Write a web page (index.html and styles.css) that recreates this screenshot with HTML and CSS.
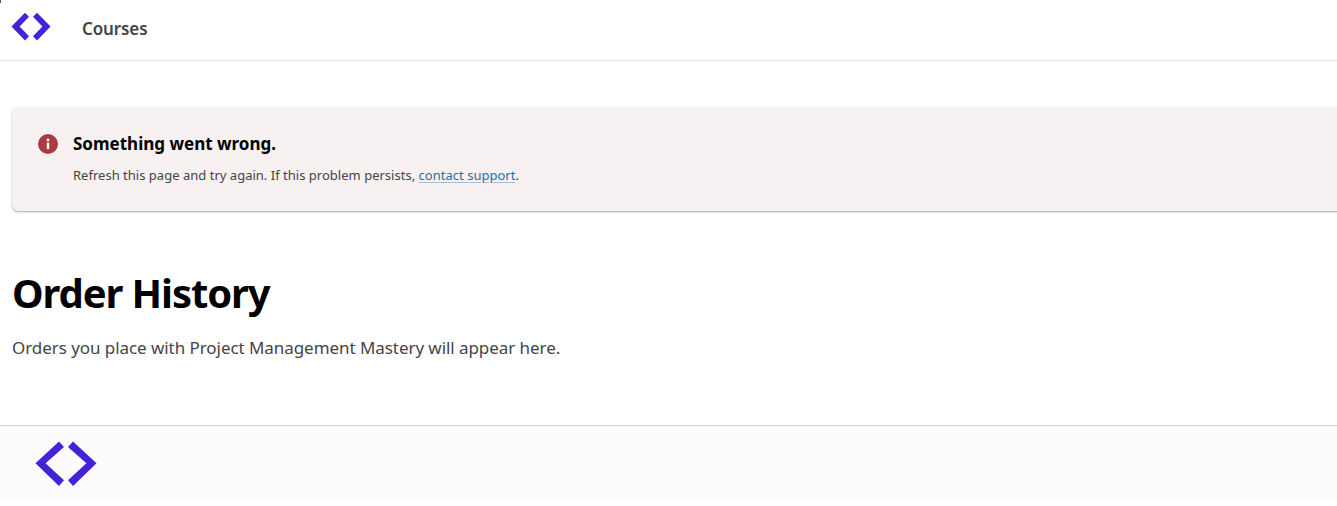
FILE: index.html
```html
<!DOCTYPE html>
<html lang="en">
<head>
<meta charset="utf-8">
<title>Order History</title>
<link rel="stylesheet" href="styles.css">
</head>
<body>
<span class="corner-tick"></span>
<header class="site-header">
  <svg class="logo logo-small" viewBox="0 0 42 31" aria-hidden="true"><path d="M1.5 15.5 15 1.7 19 5.8 9.6 15.5 19 25.2 15 29.5ZM40.5 15.5 27 1.7 23 5.8 32.4 15.5 23 25.2 27 29.5Z"/></svg>
  <a class="nav-link" href="#">Courses</a>
</header>
<main class="content">
  <section class="alert">
    <svg class="alert-icon" viewBox="0 0 20 20" aria-hidden="true"><circle cx="10" cy="10" r="10" class="alert-disc"/><rect x="8.8" y="8.6" width="2.4" height="6.4" class="alert-mark"/><circle cx="10" cy="6" r="1.4" class="alert-mark"/></svg>
    <div class="alert-body">
      <h2 class="alert-title">Something went wrong.</h2>
      <p class="alert-text">Refresh this page and try again. If this problem persists, <a class="alert-link" href="#">contact support</a>.</p>
    </div>
  </section>
  <h1 class="page-title">Order History</h1>
  <p class="page-text">Orders you place with Project Management Mastery will appear here.</p>
</main>
<footer class="site-footer">
  <svg class="logo logo-large" viewBox="0 0 64 48" aria-hidden="true"><path d="M1.5 23.3 25 1.5 30 7 11.6 23.3 30 40.2 25 46ZM62.5 23.3 39 1.5 34 7 52.4 23.3 34 40.2 39 46Z"/></svg>
</footer>
</body>
</html>
```
FILE: styles.css
```css
html, body { margin: 0; padding: 0; background: #fff; overflow: hidden; }
body { font-family: "Noto Sans", "Open Sans", sans-serif; height: 506px; color: #454545; }
.corner-tick { position: absolute; left: 0; top: 0; width: 1px; height: 3px; background: #555; }
.site-header { height: 60px; border-bottom: 1px solid #e2e2e2; display: flex; align-items: center; padding-left: 10px; }
.logo { fill: #4422d8; stroke: none; display: block; }
.logo-small { width: 42px; height: 31px; margin-top: -7px; }
.logo-large { width: 64px; height: 48px; }
.nav-link { margin-left: 30px; font-size: 17px; font-weight: 600; letter-spacing: -0.12px; color: #454545; text-decoration: none; margin-top: -4px; }
.content { padding: 46px 0 0 12px; height: 364px; box-sizing: border-box; }
.alert { width: 1400px; height: 104px; box-sizing: border-box; background: #f7f1f1; border-radius: 6px; box-shadow: 0 1px 2px rgba(0,0,0,.35); display: flex; padding: 26px 0 0 26px; }
.alert-icon { width: 20px; height: 20px; flex: none; margin: 1px 15px 0 0; }
.alert-disc { fill: #ab3b3f; }
.alert-mark { fill: #fff; }
.alert-title { margin: 0; font-size: 17px; line-height: 22px; font-weight: 700; color: #000; }
.alert-text { margin: 10px 0 0; font-size: 13px; line-height: 20px; letter-spacing: 0.015px; color: #454545; }
.alert-link { color: #2a6ea8; text-decoration: underline; text-decoration-color: #a9bfd6; text-underline-offset: 2px; }
.page-title { margin: 58px 0 0; font-size: 40px; line-height: 48px; font-weight: 700; letter-spacing: -1.1px; color: #000; }
.page-text { margin: 18px 0 0; font-size: 17px; line-height: 26px; letter-spacing: -0.06px; color: #454545; }
.site-footer { height: 62px; padding: 14px 0 0 34px; border-top: 1px solid #cfcfcf; background: #fcfcfc; }
```
